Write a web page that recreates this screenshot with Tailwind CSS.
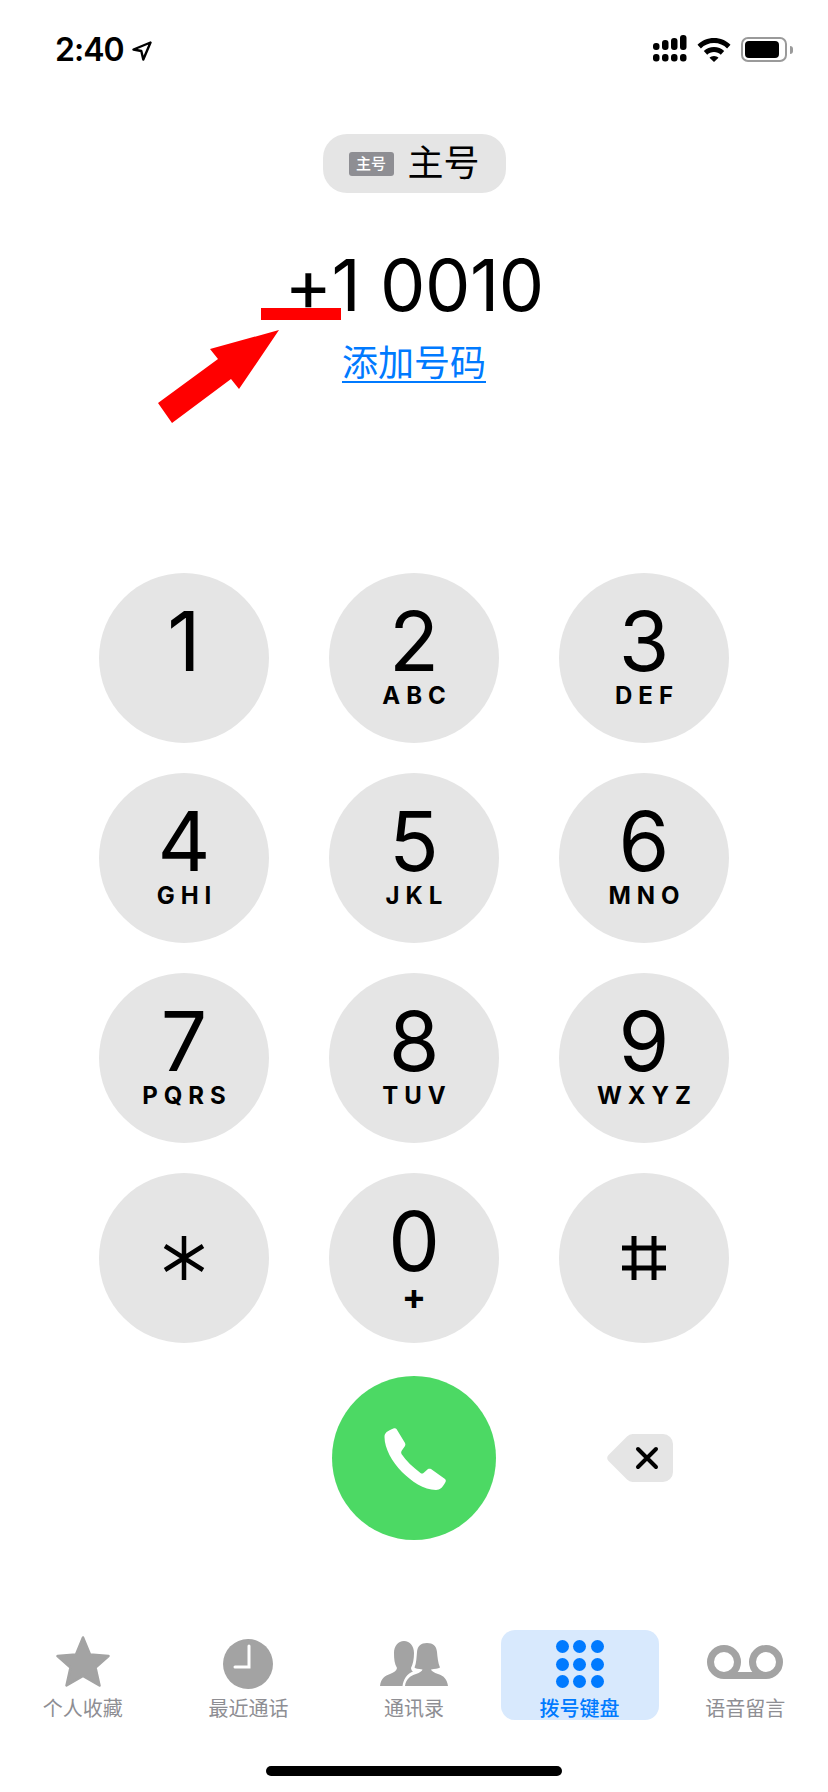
<!DOCTYPE html>
<html lang="zh">
<head>
  <meta charset="UTF-8">
  <title>拨号键盘</title>
  <script src="https://cdn.jsdelivr.net/npm/@tailwindcss/browser@4"></script>
</head>
<body class="bg-white">
  <div class="relative w-[828px] h-[1792px] overflow-hidden flex flex-col items-center bg-white text-black font-['Inter','Noto_Sans_CJK_SC',sans-serif]">

    <!-- status bar -->
    <div class="w-full h-[134px] pt-[30px] pl-[55px] pr-[35px] flex items-start justify-between">
      <div class="flex items-center h-[40px] gap-[8px]">
        <span class="text-[32px] leading-[40px] font-semibold tracking-[-1px]">2:40</span>
        <svg width="20" height="20" viewBox="0 0 20 20" fill="none" stroke="#000" stroke-width="2.400" stroke-linejoin="round" class="mt-[1px]"><path d="M18.500 1.500 1.500 8.500l7.800 1.500 2 8.500z"/></svg>
      </div>
      <div class="flex items-start gap-[10px] mt-[5px]">
        <svg width="34" height="27" viewBox="0 0 34 27" fill="#000">
          <rect x="0" y="8" width="6.500" height="7" rx="3"/><rect x="9" y="5" width="6.500" height="10" rx="3"/><rect x="18" y="3" width="6.500" height="12" rx="3"/><rect x="27" y="0" width="6.500" height="15" rx="3"/>
          <rect x="0" y="19" width="6.500" height="7.500" rx="3"/><rect x="9" y="19" width="6.500" height="7.500" rx="3"/><rect x="18" y="19" width="6.500" height="7.500" rx="3"/><rect x="27" y="19" width="6.500" height="7.500" rx="3"/>
        </svg>
        <svg width="34" height="24" viewBox="0 0 34 24" fill="#000" class="mt-[3px]">
          <path d="M17 0C10.500 0 4.700 2.500.5 6.700l3.400 3.700C7.300 7 11.900 5 17 5s9.700 2 13.100 5.400l3.400-3.700C29.300 2.500 23.500 0 17 0z"/>
          <path d="M17 9c-4 0-7.500 1.500-10.200 4.100l3.400 3.600C12 15 14.400 14 17 14s5 1 6.800 2.700l3.400-3.600C24.500 10.500 21 9 17 9z"/>
          <path d="M17 18c-1.800 0-3.400.7-4.500 1.800L17 24l4.500-4.200C20.400 18.700 18.800 18 17 18z"/>
        </svg>
        <div class="flex items-center mt-[2px]">
          <div class="w-[46px] h-[25px] rounded-[7px] border-2 border-[#9a9a9a] p-[2px]">
            <div class="w-[34px] h-full rounded-[4px] bg-black"></div>
          </div>
          <div class="w-[3px] h-[8px] rounded-r-[3px] bg-[#9a9a9a] ml-[3px]"></div>
        </div>
      </div>
    </div>

    <!-- sim pill -->
    <div class="w-[183px] h-[59px] rounded-[24px] bg-[#e5e5e5] flex items-center pl-[26px] gap-[14px]">
      <span class="w-[45px] h-[24px] rounded-[3px] bg-[#8e8e93] text-white text-[15px] leading-[24px] font-medium text-center">主号</span>
      <span class="text-[36px] leading-[59px]">主号</span>
    </div>

    <!-- number -->
    <div class="mt-[57px] text-[72px] leading-[70px] font-normal tracking-[-0.5px]">+1 0010</div>
    <a class="mt-[17px] text-[36px] leading-[52px] text-[#007aff] underline underline-offset-[5px] decoration-2">添加号码</a>

    <!-- keypad -->
    <div class="mt-[184px] grid grid-cols-[170px_170px_170px] gap-x-[60px] gap-y-[30px]">
      <div class="w-[170px] h-[170px] rounded-full bg-[#e5e5e5] flex flex-col items-center pt-[38px]"><span class="text-[82px] leading-[62px] font-normal">1</span></div>
      <div class="w-[170px] h-[170px] rounded-full bg-[#e5e5e5] flex flex-col items-center pt-[38px]"><span class="text-[82px] leading-[62px] font-normal">2</span><span class="text-[24px] leading-[26px] font-bold tracking-[6px] ml-[6px] mt-[10px]">ABC</span></div>
      <div class="w-[170px] h-[170px] rounded-full bg-[#e5e5e5] flex flex-col items-center pt-[38px]"><span class="text-[82px] leading-[62px] font-normal">3</span><span class="text-[24px] leading-[26px] font-bold tracking-[6px] ml-[6px] mt-[10px]">DEF</span></div>
      <div class="w-[170px] h-[170px] rounded-full bg-[#e5e5e5] flex flex-col items-center pt-[38px]"><span class="text-[82px] leading-[62px] font-normal">4</span><span class="text-[24px] leading-[26px] font-bold tracking-[6px] ml-[6px] mt-[10px]">GHI</span></div>
      <div class="w-[170px] h-[170px] rounded-full bg-[#e5e5e5] flex flex-col items-center pt-[38px]"><span class="text-[82px] leading-[62px] font-normal">5</span><span class="text-[24px] leading-[26px] font-bold tracking-[6px] ml-[6px] mt-[10px]">JKL</span></div>
      <div class="w-[170px] h-[170px] rounded-full bg-[#e5e5e5] flex flex-col items-center pt-[38px]"><span class="text-[82px] leading-[62px] font-normal">6</span><span class="text-[24px] leading-[26px] font-bold tracking-[6px] ml-[6px] mt-[10px]">MNO</span></div>
      <div class="w-[170px] h-[170px] rounded-full bg-[#e5e5e5] flex flex-col items-center pt-[38px]"><span class="text-[82px] leading-[62px] font-normal">7</span><span class="text-[24px] leading-[26px] font-bold tracking-[6px] ml-[6px] mt-[10px]">PQRS</span></div>
      <div class="w-[170px] h-[170px] rounded-full bg-[#e5e5e5] flex flex-col items-center pt-[38px]"><span class="text-[82px] leading-[62px] font-normal">8</span><span class="text-[24px] leading-[26px] font-bold tracking-[6px] ml-[6px] mt-[10px]">TUV</span></div>
      <div class="w-[170px] h-[170px] rounded-full bg-[#e5e5e5] flex flex-col items-center pt-[38px]"><span class="text-[82px] leading-[62px] font-normal">9</span><span class="text-[24px] leading-[26px] font-bold tracking-[6px] ml-[6px] mt-[10px]">WXYZ</span></div>
      <div class="w-[170px] h-[170px] rounded-full bg-[#e5e5e5] flex items-center justify-center">
        <svg width="42" height="44" viewBox="0 0 42 44" stroke="#000" stroke-width="4.500" fill="none"><path d="M21 0v44M2 10l38 24M40 10 2 34"/></svg>
      </div>
      <div class="w-[170px] h-[170px] rounded-full bg-[#e5e5e5] flex flex-col items-center pt-[38px]"><span class="text-[82px] leading-[62px] font-normal">0</span><span class="text-[36px] leading-[26px] font-bold mt-[10px]">+</span></div>
      <div class="w-[170px] h-[170px] rounded-full bg-[#e5e5e5] flex items-center justify-center">
        <svg width="44" height="44" viewBox="0 0 44 44" stroke="#000" stroke-width="5" fill="none"><path d="M12 0v44M32 0v44M0 12h44M0 32h44"/></svg>
      </div>
    </div>

    <!-- call row -->
    <div class="mt-[33px] w-[630px] grid grid-cols-[170px_170px_170px] gap-x-[60px] items-center">
      <div></div>
      <div class="flex justify-center">
        <div class="w-[164px] h-[164px] rounded-full bg-[#4cd964] flex items-center justify-center">
          <svg width="62" height="62" viewBox="0 0 62 62" fill="#fff" class="ml-[2px] mt-[2px]"><path d="M.5 9C.5 5 3 3 10 .3 11 0 12 .3 12.500 1L21 15c.5 1 .5 2 0 3l-3.500 5c-.5 1-.5 2 0 3 4.500 7 11.500 13 19 19 1 .7 2 .7 3 0l4.500-4c1-.5 2-.5 3 0l14 10c1 1 1 2 .5 3-2.500 5-5.500 8-9.500 8-12 0-25-9-34-18C8 34 .5 20 .5 9z"/></svg>
        </div>
      </div>
      <div class="flex justify-center">
        <svg width="66" height="48" viewBox="0 0 66 48" class="ml-[-8px]"><path d="M26 0h30a10 10 0 0 1 10 10v28a10 10 0 0 1-10 10H26a8 8 0 0 1-6-2.500L1.500 27a4.500 4.500 0 0 1 0-6L20 2.500A8 8 0 0 1 26 0z" fill="#e5e5e5"/><path d="M31 15l18 18M49 15 31 33" stroke="#000" stroke-width="4" stroke-linecap="round" fill="none"/></svg>
      </div>
    </div>

    <!-- tab bar -->
    <div class="absolute left-0 top-[1630px] w-full grid grid-cols-5 h-[90px]">
      <div class="flex flex-col items-center">
        <div class="h-[68px] flex items-end">
          <svg width="54" height="51" viewBox="0 0 54 51" fill="#a3a3a3" stroke="#a3a3a3" stroke-width="2.500" stroke-linejoin="round" class="mb-[11px]"><path d="M27 1.500 34 18.500 52.500 20 39.500 31.500 43.500 49.500 27 40 10.500 49.500 14.500 31.500 1.500 20 20 18.500z"/></svg>
        </div>
        <span class="text-[20px] leading-[22px] text-[#8e8e93]">个人收藏</span>
      </div>
      <div class="flex flex-col items-center">
        <div class="h-[68px] flex items-end">
          <svg width="50" height="50" viewBox="0 0 50 50" class="mb-[9px]"><circle cx="25" cy="25" r="25" fill="#a3a3a3"/><path d="M26 7v21H12" stroke="#fff" stroke-width="3" stroke-linecap="round" fill="none"/></svg>
        </div>
        <span class="text-[20px] leading-[22px] text-[#8e8e93]">最近通话</span>
      </div>
      <div class="flex flex-col items-center">
        <div class="h-[68px] flex items-end">
          <svg width="68" height="45" viewBox="0 0 68 45" fill="#a3a3a3" class="mb-[12px]">
            <path d="M0 45C1 37 5 35 10 33 14 31.500 16.500 30 17 27 14.500 23 14 18 14 12 14 5 18 0 24 0 30 0 34 5 34 12 34 18 33 23 31 27 31 28.500 32 30 33 30.500 27 33 23.500 38 22.500 45z"/>
            <path d="M25 45C26 38 30 35 36 33 40 31.500 42 30 42.500 28.500 38 28 35.500 27.500 34.500 26.500 36.500 22 36.500 16 37 11 37.500 5 41 2 47 2 53 2 56.500 5 57 11 57.500 16 58 22 60 26.500 58 27.500 55 28 51 28.500 51.500 30 54 31.500 58 33 64 35 67 38 68 45z"/>
          </svg>
        </div>
        <span class="text-[20px] leading-[22px] text-[#8e8e93]">通讯录</span>
      </div>
      <div class="flex flex-col items-center">
        <div class="w-[158px] h-[90px] rounded-[14px] bg-[#d8e9fd] flex flex-col items-center overflow-hidden">
          <div class="grid grid-cols-[13px_13px_13px] auto-rows-[13px] gap-[4.500px] mt-[10px] mb-[10px]">
            <i class="block rounded-full bg-[#007aff]"></i><i class="block rounded-full bg-[#007aff]"></i><i class="block rounded-full bg-[#007aff]"></i>
            <i class="block rounded-full bg-[#007aff]"></i><i class="block rounded-full bg-[#007aff]"></i><i class="block rounded-full bg-[#007aff]"></i>
            <i class="block rounded-full bg-[#007aff]"></i><i class="block rounded-full bg-[#007aff]"></i><i class="block rounded-full bg-[#007aff]"></i>
          </div>
          <span class="text-[20px] leading-[22px] text-[#007aff] font-medium">拨号键盘</span>
        </div>
      </div>
      <div class="flex flex-col items-center">
        <div class="h-[68px] flex items-end">
          <svg width="76" height="34" viewBox="0 0 76 34" fill="none" stroke="#a3a3a3" stroke-width="7" class="mb-[19px]"><circle cx="17" cy="17" r="13.500"/><circle cx="59" cy="17" r="13.500"/><path d="M17 30.500h42"/></svg>
        </div>
        <span class="text-[20px] leading-[22px] text-[#8e8e93]">语音留言</span>
      </div>
    </div>

    <!-- home indicator -->
    <div class="absolute left-[266px] top-[1766px] w-[296px] h-[10px] rounded-full bg-black"></div>

    <!-- red annotation drawn over the screenshot -->
    <div class="absolute left-[261px] top-[308px] w-[80px] h-[12px] bg-[#ff0000]"></div>
    <svg class="absolute left-0 top-0" width="828" height="500" viewBox="0 0 828 500" fill="#ff0000"><path d="M279 330 210 349 218 359 158 403 172 423 231 379 239 389z"/></svg>
  </div>
</body>
</html>
